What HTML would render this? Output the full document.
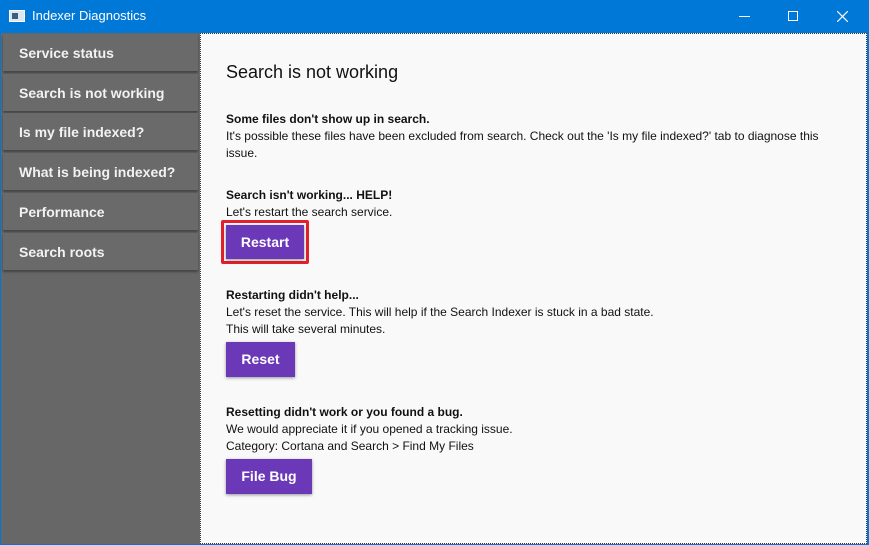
<!DOCTYPE html>
<html><head><style>
*{margin:0;padding:0;box-sizing:border-box}
body{width:869px;height:545px;overflow:hidden;background:#0078d7;font-family:"Segoe UI","Liberation Sans",sans-serif;position:relative}
.tb{position:absolute;left:0;top:0;width:869px;height:33px;background:#0078d7;color:#fff}
.tb .t{position:absolute;left:32px;top:8px;font-size:13px}
.ic{position:absolute;left:9px;top:10px;width:16px;height:12px;background:#dfe7ee;border:1px solid #fff}
.ic:after{content:"";position:absolute;left:2px;top:2px;width:6px;height:6px;background:#3a5f7f}
.side{position:absolute;left:1px;top:33px;width:199px;height:511px;background:#676767}
.item{position:absolute;left:2px;width:195px;height:37px;background:#6a6a6a;color:#f2f2f2;font-weight:bold;font-size:14px;padding:11px 0 0 16px;box-shadow:0 2px 2px rgba(0,0,0,.35)}
.main{position:absolute;left:200px;top:33px;width:667px;height:511px;background:#f9f9f9;border:1px dotted #333}
.main h1{position:absolute;left:25px;top:28px;font-size:18px;font-weight:normal;color:#111}
.s{position:absolute;left:25px;font-size:12px;color:#111;line-height:17px}
.s b{display:block}
.btn{position:absolute;left:25px;background:#6b38b8;color:#fff;font-weight:bold;font-size:14px;text-align:center;box-shadow:0 1px 3px rgba(0,0,0,.4)}
.ctl{position:absolute;top:9px;color:#fff;font-size:14px}
</style></head><body>
<div class="tb"><div class="ic"></div><div class="t">Indexer Diagnostics</div>
<div style="position:absolute;left:739px;top:16px;width:11px;height:1px;background:#fff"></div>
<div style="position:absolute;left:788px;top:11px;width:10px;height:10px;border:1px solid #fff"></div>
<svg style="position:absolute;left:837px;top:11px" width="11" height="11"><path d="M0 0L11 11M11 0L0 11" stroke="#fff" stroke-width="1.2"/></svg>
</div>
<div class="side">
<div class="item" style="top:1px">Service status</div>
<div class="item" style="top:41px">Search is not working</div>
<div class="item" style="top:80px">Is my file indexed?</div>
<div class="item" style="top:120px">What is being indexed?</div>
<div class="item" style="top:160px">Performance</div>
<div class="item" style="top:200px">Search roots</div>
</div>
<div class="main">
<h1>Search is not working</h1>
<div class="s" style="top:77px"><b>Some files don't show up in search.</b>It's possible these files have been excluded from search. Check out the 'Is my file indexed?' tab to diagnose this<br>issue.</div>
<div class="s" style="top:153px"><b>Search isn't working... HELP!</b>Let's restart the search service.</div>
<div style="position:absolute;left:20px;top:186px;width:88px;height:44px;border:3px solid #e0202a;border-radius:2px"></div>
<div class="btn" style="top:191px;width:78px;height:34px;line-height:34px">Restart</div>
<div class="s" style="top:253px"><b>Restarting didn't help...</b>Let's reset the service. This will help if the Search Indexer is stuck in a bad state.<br>This will take several minutes.</div>
<div class="btn" style="top:308px;width:69px;height:35px;line-height:35px">Reset</div>
<div class="s" style="top:370px"><b>Resetting didn't work or you found a bug.</b>We would appreciate it if you opened a tracking issue.<br>Category: Cortana and Search &gt; Find My Files</div>
<div class="btn" style="top:425px;width:86px;height:35px;line-height:35px">File Bug</div>
</div>
</body></html>
